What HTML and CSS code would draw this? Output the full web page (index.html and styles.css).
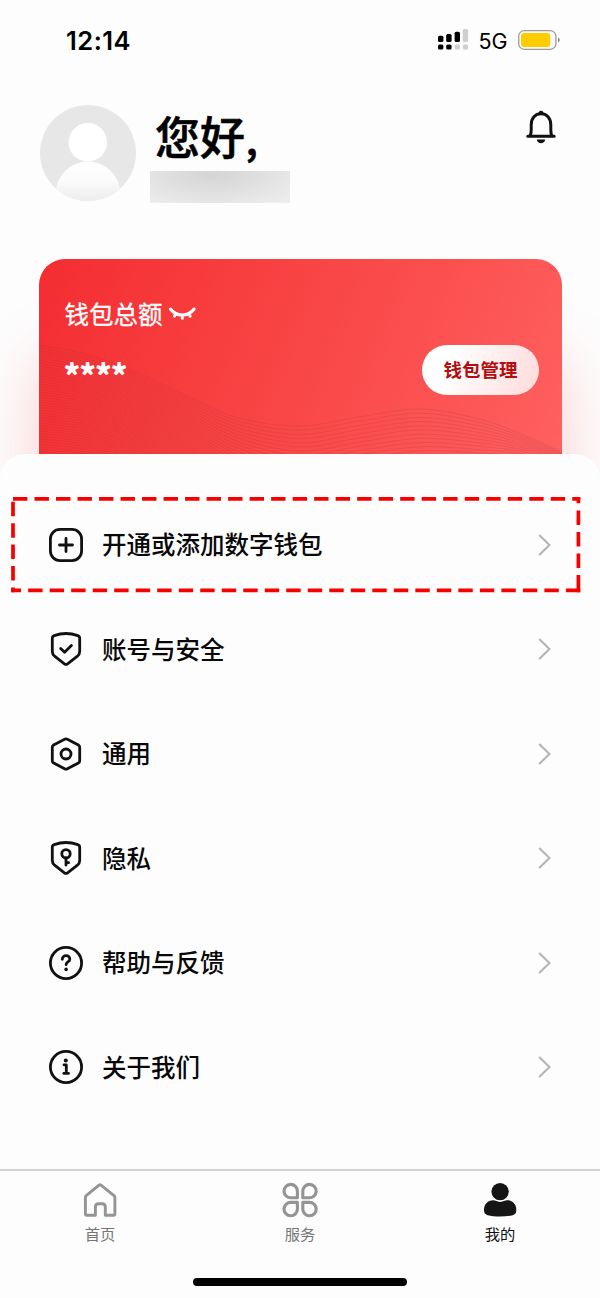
FILE: index.html
```html
<!DOCTYPE html>
<html lang="zh-CN">
<head>
<meta charset="utf-8">
<title>我的</title>
<link rel="stylesheet" href="styles.css">
</head>
<body>
<div class="screen">
  <header class="status">
    <span class="time">12:14</span>
    <div class="status-right">
      <svg class="signal" width="31" height="22" viewBox="0 0 31 22">
        <g fill="#000"><rect x="0" y="6.7" width="5.4" height="6.3" rx="1.6"/><rect x="8.2" y="4.9" width="5.4" height="8.1" rx="1.6"/><rect x="16.6" y="2.7" width="5.4" height="10.3" rx="1.6"/><rect x="0" y="15.4" width="5.4" height="5.2" rx="1.6"/><rect x="8.2" y="15.4" width="5.4" height="5.2" rx="1.6"/></g>
        <g fill="#cfcfcf"><rect x="24.7" y="0" width="5.4" height="13" rx="1.6"/><rect x="16.6" y="15.4" width="5.4" height="5.2" rx="1.6"/><rect x="24.7" y="15.4" width="5.4" height="5.2" rx="1.6"/></g>
      </svg>
      <span class="network">5G</span>
      <svg class="battery" width="43" height="20" viewBox="0 0 43 20">
        <rect x=".7" y=".7" width="37.2" height="18.6" rx="5.6" fill="none" stroke="#9b9b9b" stroke-width="1.3"/>
        <rect x="3" y="3" width="29.3" height="14" rx="3.2" fill="#fc0"/>
        <path d="M40 7.6c2.3.8 2.3 4 0 4.8z" fill="#888"/>
      </svg>
    </div>
  </header>

  <section class="profile">
    <svg class="avatar" width="96" height="96" viewBox="0 0 96 96">
      <defs>
        <clipPath id="face"><circle cx="48" cy="48" r="48"/></clipPath>
        <linearGradient id="body" x1="0" y1="0" x2="0" y2="1"><stop offset="0" stop-color="#fff"/><stop offset=".3" stop-color="#fbfbfb"/><stop offset=".62" stop-color="#ececec"/></linearGradient>
      </defs>
      <g clip-path="url(#face)"><rect width="96" height="96" fill="#e7e7e7"/><circle cx="48" cy="89" r="32.5" fill="url(#body)"/><circle cx="47.8" cy="37.3" r="19.2" fill="#fff"/></g>
    </svg>
    <div class="greeting">
      <h1>您好<span class="comma">,</span></h1>
      <div class="masked-name"></div>
    </div>
    <svg class="bell" width="30" height="34" viewBox="0 0 30 34" fill="none" stroke="#111" stroke-width="3" stroke-linejoin="round" stroke-linecap="round">
      <path d="M1.8 26.3h26.4M4 26c1.100-1.800 1.200-3.600 1.200-6v-5C5.200 8 9.300 3.800 15 3.800S24.800 8 24.800 15v5c0 2.400.1 4.200 1.200 6"/>
      <path d="M12.500 3.400a2.500 2.700 0 0 1 5 0z" fill="#111" stroke="none"/><path d="M10.800 29.600h8.400c-.6 5-7.800 5-8.400 0z" fill="#111" stroke="none"/>
    </svg>
  </section>

  <section class="card">
    <svg class="waves" id="waves" width="523" height="196" viewBox="0 0 523 196"></svg>
    <div class="card-title"><span>钱包总额</span>
      <svg width="27" height="14" viewBox="0 0 27 14" fill="none" stroke="#fff" stroke-width="3" stroke-linecap="round"><path d="M1.500 2c6 8 17.500 8 23.600 0M6.500 7.200l-1 2M13.300 8.500v2.700M20.100 7.200l1 2"/></svg>
    </div>
    <div class="card-row"><span class="amount">****</span><span class="manage">钱包管理</span></div>
  </section>

  <main class="sheet">
    <svg class="highlight" width="570" height="96" viewBox="0 0 570 96" fill="none" stroke="#f90000" stroke-width="3.700">
      <path d="M2 1.800H569.300" stroke-dasharray="14.400 7.110"/>
      <path d="M567.400 0V6.200M567.400 13.400V28M567.400 34.900V49.500M567.400 56.400V71M567.400 78V95.300"/>
      <path d="M569.300 93.400H0" stroke-dasharray="14.400 7.110"/>
      <path d="M2 4.700V19.200M2 26.200V40.700M2 47.600V62.100M2 69V83.500M2 90.500V95.300"/>
    </svg>
    <a class="item">
      <svg class="icon" viewBox="0 0 36 36"><rect x="2.400" y="2.400" width="31.200" height="31.200" rx="9.500"/><path d="M18 11.500v13M11.500 18h13"/></svg>
      <span>开通或添加数字钱包</span><svg class="chevron" viewBox="0 0 14 22"><path d="M1.700 1.500L11.500 11l-9.800 9.500"/></svg>
    </a>
    <a class="item">
      <svg class="icon" viewBox="0 0 36 36"><path d="M6.200 4.600Q18 .4 29.800 4.600Q31.700 5.300 31.700 7.300V20.500Q31.700 23.400 29.400 25.200L19.600 32.800Q18 34 16.400 32.800L6.600 25.200Q4.300 23.400 4.300 20.500V7.300Q4.300 5.300 6.200 4.600z"/><path d="M12.700 17.500l3.900 3.800 6.800-6.700"/></svg>
      <span>账号与安全</span><svg class="chevron" viewBox="0 0 14 22"><path d="M1.700 1.500L11.500 11l-9.800 9.500"/></svg>
    </a>
    <a class="item">
      <svg class="icon" viewBox="0 0 36 36"><path d="M16.600 3.200Q18 2.400 19.400 3.200L30.400 9.100Q31.700 9.800 31.700 11.300V24.700Q31.700 26.200 30.400 26.900L19.400 32.800Q18 33.600 16.600 32.800L5.600 26.900Q4.300 26.200 4.300 24.700V11.300Q4.300 9.800 5.600 9.100z"/><circle cx="18" cy="18" r="5"/></svg>
      <span>通用</span><svg class="chevron" viewBox="0 0 14 22"><path d="M1.700 1.500L11.500 11l-9.800 9.500"/></svg>
    </a>
    <a class="item">
      <svg class="icon" viewBox="0 0 36 36"><path d="M6.200 4.600Q18 .4 29.800 4.600Q31.700 5.300 31.700 7.300V20.500Q31.700 23.400 29.400 25.200L19.600 32.800Q18 34 16.400 32.800L6.600 25.200Q4.300 23.400 4.300 20.500V7.300Q4.300 5.300 6.200 4.600z"/><circle cx="18" cy="13.800" r="4.200"/><path d="M18 18v7M18 22.700h2.600"/></svg>
      <span>隐私</span><svg class="chevron" viewBox="0 0 14 22"><path d="M1.700 1.500L11.500 11l-9.800 9.500"/></svg>
    </a>
    <a class="item">
      <svg class="icon" viewBox="0 0 36 36"><circle cx="18" cy="18" r="15.600"/><path d="M14.300 14.300c0-5 7.800-4.800 7.500 0-.2 2.800-3.700 2.600-3.700 5.400"/><circle class="dot" cx="18.100" cy="24.400" r="1.800"/></svg>
      <span>帮助与反馈</span><svg class="chevron" viewBox="0 0 14 22"><path d="M1.700 1.500L11.500 11l-9.800 9.500"/></svg>
    </a>
    <a class="item">
      <svg class="icon" viewBox="0 0 36 36"><circle cx="18" cy="18" r="15.600"/><path d="M16 15.800h2.300v8.400M15.800 24.400h4.700"/><circle class="dot" cx="17.800" cy="11.600" r="2"/></svg>
      <span>关于我们</span><svg class="chevron" viewBox="0 0 14 22"><path d="M1.700 1.500L11.500 11l-9.800 9.500"/></svg>
    </a>
  </main>

  <nav class="tabs">
    <a class="tab">
      <svg width="36" height="36" viewBox="0 0 36 36" fill="none" stroke="#949494" stroke-width="2.900" stroke-linejoin="round"><path d="M3.400 15.300Q3.400 14.300 4.200 13.600L17 3.100Q18 2.300 19 3.100L32 13.600Q32.900 14.300 32.900 15.300V31.700Q32.900 33.200 31.400 33.200H23.300V24.900Q23.300 21.700 20.100 21.700H16.600Q13.400 21.700 13.400 24.900V33.200H4.900Q3.400 33.200 3.400 31.700z"/></svg>
      <span>首页</span>
    </a>
    <a class="tab">
      <svg width="36" height="36" viewBox="0 0 36 36" fill="none" stroke="#949494" stroke-width="3.100" stroke-linejoin="round"><path d="M15.400 15.800H9.200A6.700 6.700 0 1 1 15.400 9.200z"/><path d="M20.800 15.800H27A6.700 6.700 0 1 0 20.800 9.200zM15.400 20.400H9.200A6.700 6.700 0 1 0 15.400 27zM20.800 20.400H27A6.700 6.700 0 1 1 20.800 27z"/></svg>
      <span>服务</span>
    </a>
    <a class="tab active">
      <svg width="36" height="36" viewBox="0 0 36 36" fill="#151515"><circle cx="18.100" cy="9.600" r="8.700"/><path d="M11.200 18.300c2.400 0 3.600 1.600 7 1.600s4.400-1.600 7-1.600c5.300 0 9.100 4.100 9.100 9.300 0 3.100-.6 4.900-3.500 5.600-7 1.800-18.400 1.800-25.200 0-2.900-.7-3.600-2.500-3.600-5.600 0-5.200 3.900-9.300 9.200-9.300z"/></svg>
      <span>我的</span>
    </a>
  </nav>
  <div class="home-bar"></div>
</div>
<script src="waves.js"></script>
</body>
</html>
```
FILE: styles.css
```css
* { box-sizing: border-box; }
body {
  margin: 0;
  background: #fdfdfd;
  color: #080808;
  font-family: "Noto Sans CJK SC", sans-serif;
}
.screen {
  width: 600px;
  height: 1298px;
  display: flex;
  flex-direction: column;
  overflow: hidden;
}
.status {
  height: 80px;
  flex: none;
  display: flex;
  justify-content: space-between;
  align-items: center;
  padding: 0 39.500px 0 66px;
  font-family: Inter, sans-serif;
  color: #000;
}
.time { font-size: 25.500px; font-weight: 600; line-height: 30px; letter-spacing: .5px; padding-top: 1px; }
.status-right { display: flex; align-items: center; }
.network { font-size: 21.500px; line-height: 26px; margin: 2px 10px 0 9px; }
.profile {
  height: 179px;
  flex: none;
  display: flex;
  align-items: flex-start;
  padding: 25px 44px 0 40px;
}
.avatar { flex: none; }
.greeting { flex: 1; padding-left: 14px; }
h1 {
  margin: -2px 0 2px 5px;
  font-size: 45px;
  line-height: 66px;
  font-weight: 500;
  color: #000;
  -webkit-text-stroke: .6px #000;
}
.comma { font-size: 35px; font-weight: 700; margin-left: 1px; line-height: 0; }
.masked-name {
  width: 140px;
  height: 32px;
  margin-left: -.5px;
  background: radial-gradient(ellipse at 45% 10%, #d4d4d4, #e0e0e0 45%, #efefef 100%);
}
.bell { margin-top: 5px; }
.card {
  position: relative;
  flex: none;
  width: 523px;
  height: 195px;
  margin-left: 39px;
  padding: 38px 23px 0 25.500px;
  border-radius: 26px 26px 0 0;
  color: #fff;
  background: linear-gradient(112deg, #f42d31 0%, #f94646 50%, #ff6060 100%);
  box-shadow: 0 100px 64px 2px rgba(250, 70, 80, .25);
}
.waves { position: absolute; left: 0; top: 0; }
.waves path { fill: none; stroke: #9c3038; stroke-opacity: .24; stroke-width: .8; }
.card-title {
  position: relative;
  display: flex;
  align-items: center;
  gap: 6px;
  font-size: 24.500px;
  line-height: 34px;
  -webkit-text-stroke: .3px #fff;
}
.card-row {
  position: relative;
  display: flex;
  justify-content: space-between;
  margin-top: 14px;
}
.amount {
  font: 700 33px/50px "Noto Sans CJK SC", sans-serif;
  letter-spacing: -1px;
  margin-left: -1px;
  padding-top: 5px;
  height: 50px;
  -webkit-text-stroke: .4px #fff;
}
.manage {
  width: 117px;
  height: 50px;
  border-radius: 25px;
  background: linear-gradient(110deg, #fff 25%, #ffdada 100%);
  color: #b50c10;
  font-size: 18.500px;
  font-weight: 700;
  line-height: 49px;
  text-align: center;
}
.sheet {
  position: relative;
  flex: none;
  height: 715px;
  padding-top: 38.500px;
  background: #fdfdfd;
  border-radius: 25px 25px 0 0;
}
.highlight { position: absolute; left: 11px; top: 43px; }
.item {
  height: 104.500px;
  display: flex;
  align-items: center;
  padding: 0 48px;
  font-size: 24.500px;
  font-weight: 500;
}
.item span { flex: 1; margin: -2px 0 0 18px; }
.icon {
  width: 36px;
  height: 36px;
  fill: none;
  stroke: #111;
  stroke-width: 2.800;
  stroke-linecap: round;
  stroke-linejoin: round;
}
.icon .dot { fill: #111; stroke: none; }
.chevron { width: 14px; height: 22px; fill: none; stroke: #b3b3b3; stroke-width: 2; stroke-linecap: round; }
.tabs {
  position: relative;
  flex: none;
  height: 108px;
  border-top: 2px solid #d2d2d2;
  background: #fdfdfd;
  display: grid;
  grid-template-columns: repeat(3, 1fr);
}
.tab {
  display: flex;
  flex-direction: column;
  align-items: center;
  padding-top: 11px;
  font-size: 15.300px;
  line-height: 22px;
  color: #757575;
}
.tab span { margin-top: 4px; }
.tab.active { color: #111; }
.home-bar {
  position: relative;
  flex: none;
  width: 214px;
  height: 8px;
  margin: 1px auto 0;
  border-radius: 4px;
  background: #000;
}
```
FILE: waves.js
```js
// Contour lines across the card: [x, top y, line spacing] at each anchor.
const anchors = [[0, 86, 2.6], [50, 96, 2.5], [100, 114, 2.4], [150, 138, 2.7], [200, 159, 3.4], [261, 167, 4.2], [320, 158, 4.2], [381, 150, 4.2], [440, 160, 3.4], [482, 175, 2.2], [523, 193, 1]];
const svg = document.getElementById('waves');
for (let i = 0; i < 44; i++) {
  const p = anchors.map(([x, y, gap]) => [x, y + i * gap]);
  let d = `M${p[0]}`;
  for (let k = 0; k < p.length - 1; k++) {
    const a = p[Math.max(k - 1, 0)], b = p[k], c = p[k + 1], e = p[Math.min(k + 2, p.length - 1)];
    d += `C${b[0] + (c[0] - a[0]) / 6} ${b[1] + (c[1] - a[1]) / 6} ${c[0] - (e[0] - b[0]) / 6} ${c[1] - (e[1] - b[1]) / 6} ${c}`;
  }
  const path = document.createElementNS('http://www.w3.org/2000/svg', 'path');
  path.setAttribute('d', d);
  svg.append(path);
}
```
